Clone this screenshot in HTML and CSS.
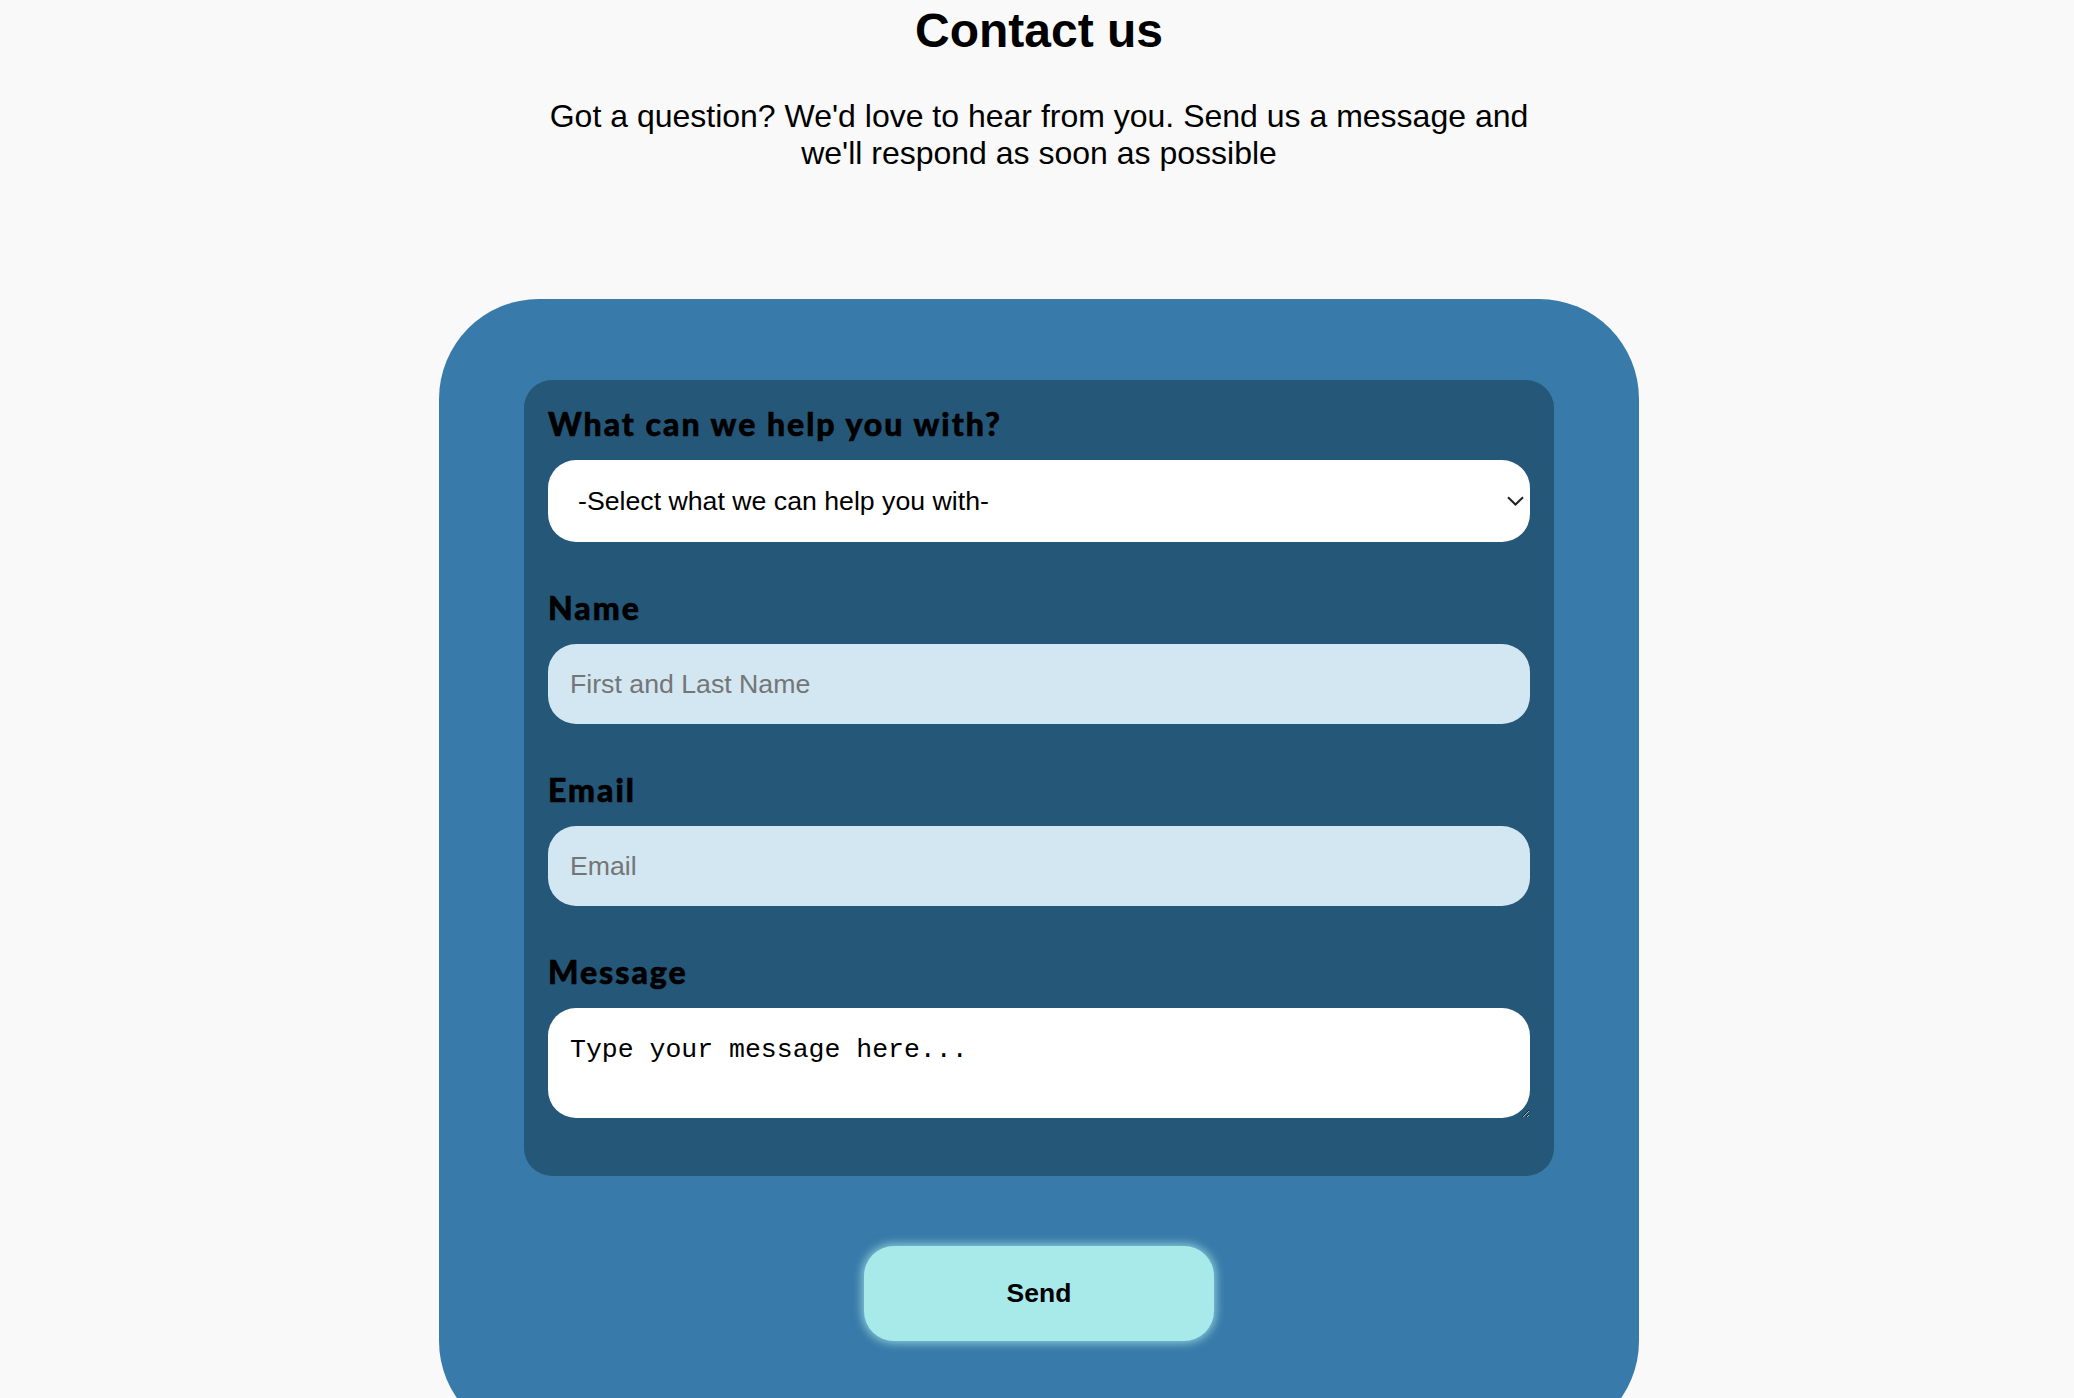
FILE: index.html
```html
<!DOCTYPE html>
<html lang="en">
<head>
<meta charset="utf-8">
<title>Contact us</title>
<link rel="stylesheet" href="styles.css">
</head>
<body>
<header class="intro">
  <h1 class="title">Contact us</h1>
  <p class="lead">Got a question? We'd love to hear from you. Send us a message and we'll respond as soon as possible</p>
</header>
<form class="card">
  <div class="panel">
    <div class="field">
      <label class="label" for="topic">What can we help you with?</label>
      <div class="select-wrap">
        <select id="topic" class="control select">
          <option>-Select what we can help you with-</option>
        </select>
        <svg class="chevron" width="17" height="10" viewBox="0 0 17 10" aria-hidden="true"><path d="M1 1.2l7.5 7.3 7.5-7.3" fill="none" stroke="#222" stroke-width="2"/></svg>
      </div>
    </div>
    <div class="field">
      <label class="label" for="name">Name</label>
      <input id="name" class="control input" type="text" placeholder="First and Last Name">
    </div>
    <div class="field">
      <label class="label" for="email">Email</label>
      <input id="email" class="control input" type="email" placeholder="Email">
    </div>
    <div class="field">
      <label class="label" for="message">Message</label>
      <textarea id="message" class="control textarea" placeholder="Type your message here..."></textarea>
    </div>
  </div>
  <div class="actions">
    <button type="button" class="send">Send</button>
  </div>
</form>
</body>
</html>
```
FILE: styles.css
```css
html, body {
  margin: 0;
  padding: 0;
}
body {
  background: #f9f9f9;
  font-family: "Liberation Sans", Arial, sans-serif;
  color: #000;
  padding-left: 4px;
  overflow: hidden;
}
.intro {
  text-align: center;
}
.title {
  margin: 3px 0 0;
  font-size: 48px;
  line-height: 55px;
  font-weight: 700;
}
.lead {
  margin: 40px auto 0;
  max-width: 1000px;
  font-size: 32px;
  line-height: 37px;
}
.card {
  width: 1200px;
  box-sizing: border-box;
  margin: 127px auto 0;
  padding: 81px 85px 100px;
  background: #387aa9;
  border-radius: 100px;
}
.panel {
  background: #255779;
  border-radius: 28px;
  padding: 26px 24px 58px;
  display: flex;
  flex-direction: column;
  gap: 48px;
}
.field {
  display: flex;
  flex-direction: column;
}
.label {
  font-family: Lato, "Open Sans", sans-serif;
  font-weight: 900;
  font-size: 32px;
  line-height: 36px;
  letter-spacing: 2px;
  -webkit-text-stroke: 0.6px #000;
  margin-bottom: 18px;
  color: #000;
}
.control {
  display: block;
  width: 100%;
  box-sizing: border-box;
  border: none;
  outline: none;
  border-radius: 28px;
  font-family: "Liberation Sans", Arial, sans-serif;
  font-size: 26.7px;
  margin: 0;
}
.select-wrap {
  position: relative;
}
.select {
  -webkit-appearance: none;
  appearance: none;
  height: 82px;
  background: #fff;
  color: #000;
  padding: 0 50px 0 30px;
}
.chevron {
  position: absolute;
  right: 6px;
  top: 36px;
}
.input {
  height: 80px;
  background: #d2e7f2;
  padding: 0 22px;
  color: #000;
}
.input::placeholder {
  color: #757575;
}
.textarea {
  height: 110px;
  background: #fff;
  padding: 27px 22px 10px;
  font-family: "Liberation Mono", "Courier New", monospace;
  font-size: 26.5px;
  line-height: 30px;
  resize: both;
}
.textarea::placeholder {
  color: #000;
}
.actions {
  display: flex;
  justify-content: center;
  margin-top: 70px;
}
.send {
  width: 350px;
  height: 95px;
  border: none;
  border-radius: 30px;
  background: #a8e9ea;
  box-shadow: 0 0 10px 2px rgba(168, 233, 234, 0.75);
  font-family: "Liberation Sans", Arial, sans-serif;
  font-weight: 700;
  font-size: 26.5px;
  color: #000;
  cursor: pointer;
}
```
